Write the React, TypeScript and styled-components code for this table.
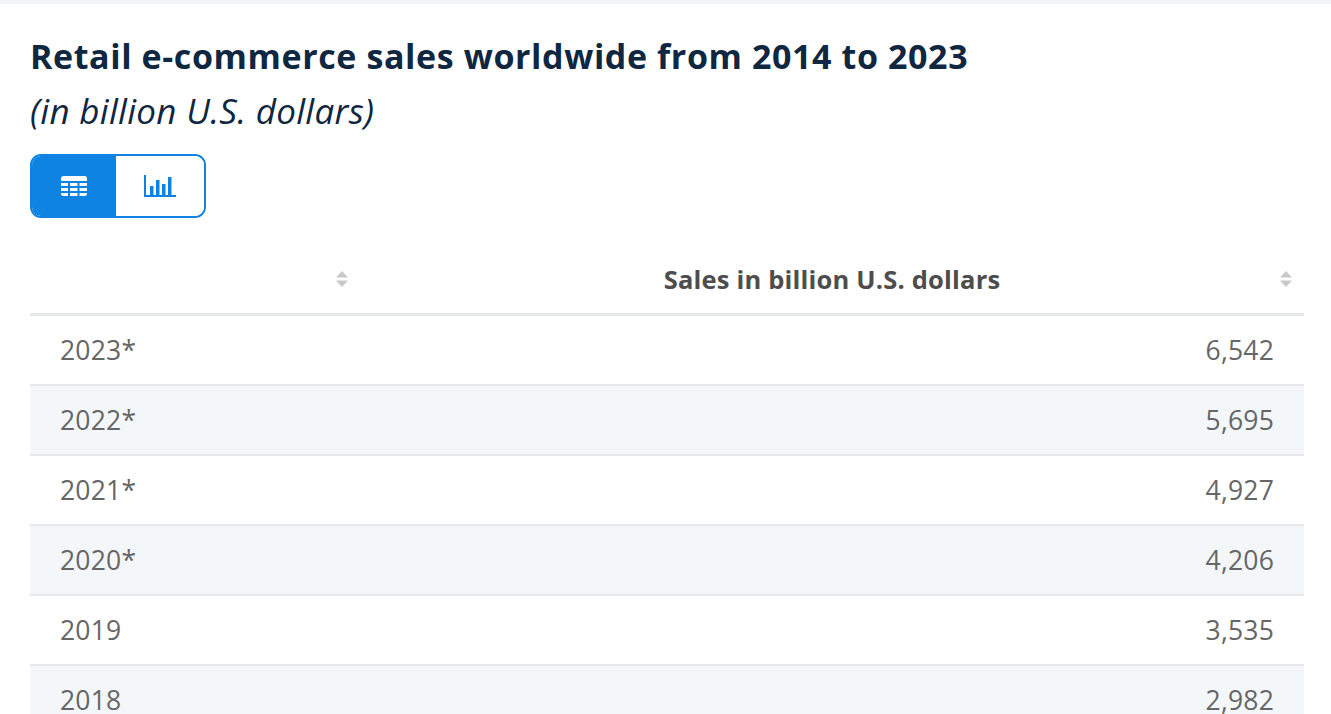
import React from "react";
import styled, { createGlobalStyle } from "styled-components";

const Global = createGlobalStyle`
  html, body { margin: 0; padding: 0; background: #fff; }
  body { font-family: "Open Sans", "Noto Sans", sans-serif; }
`;

const Page = styled.div`
  border-top: 4px solid #f4f5f7;
  padding: 0 27px 0 30px;
  background: #fff;
  height: 710px;
  overflow: hidden;
`;

const Title = styled.h1`
  margin: 32px 0 0;
  font-size: 34px;
  line-height: 40px;
  font-weight: 700;
  color: #0f2740;
  letter-spacing: 0.6px;
`;

const Subtitle = styled.div`
  margin-top: 15px;
  font-size: 35px;
  line-height: 40px;
  font-style: italic;
  color: #0f2740;
  letter-spacing: 0.3px;
`;

const Toggle = styled.div`
  margin-top: 23px;
  display: inline-flex;
  width: 176px;
  height: 64px;
  box-sizing: border-box;
  border: 2px solid #0e83e2;
  border-radius: 11px;
  overflow: hidden;
`;

const ToggleButton = styled.div<{ $active?: boolean }>`
  flex: ${(p) => (p.$active ? "0 0 84px" : "1")};
  display: flex;
  align-items: center;
  justify-content: center;
  background: ${(p) => (p.$active ? "#0e83e2" : "#fff")};
  color: ${(p) => (p.$active ? "#fff" : "#0e83e2")};
`;

const Table = styled.div`
  margin-top: 27px;
  width: 1274px;
`;

const HeaderRow = styled.div`
  display: grid;
  grid-template-columns: 330px 1fr;
  height: 68px;
  border-bottom: 3px solid #e6e7e8;
`;

const HeaderCell = styled.div`
  position: relative;
  display: flex;
  align-items: center;
  justify-content: center;
  font-size: 25.5px;
  font-weight: 700;
  color: #4d4d4d;
  letter-spacing: 0.2px;
`;

const SortIcon = styled.svg`
  position: absolute;
  right: 11px;
  top: 24px;
`;

const Row = styled.div<{ $alt?: boolean }>`
  display: grid;
  grid-template-columns: 330px 1fr;
  height: 68px;
  border-bottom: 2px solid #e7e8ea;
  background: ${(p) => (p.$alt ? "#f4f7fa" : "#fff")};
`;

const Cell = styled.div<{ $right?: boolean }>`
  display: flex;
  align-items: center;
  justify-content: ${(p) => (p.$right ? "flex-end" : "flex-start")};
  padding: 0 30px;
  font-size: 26.5px;
  color: #666;
  letter-spacing: 0.2px;
`;

const Sort = () => (
  <SortIcon width="14" height="20" viewBox="0 0 14 20">
    <path d="M7 2 L13 8.5 H1 Z" fill="#c9c9c9" />
    <path d="M1 11.5 H13 L7 18 Z" fill="#c9c9c9" />
  </SortIcon>
);

const TableIcon = () => (
  <svg width="26" height="20" viewBox="0 0 26 20">
    <rect x="0" y="0" width="26" height="20" rx="2.5" fill="#fff" />
    <g fill="#0e83e2">
      <rect x="7" y="5" width="2" height="15" />
      <rect x="16.5" y="5" width="2" height="15" />
      <rect x="0" y="5" width="26" height="2" />
      <rect x="0" y="10" width="26" height="2" />
      <rect x="0" y="15" width="26" height="2" />
    </g>
  </svg>
);

const ChartIcon = () => (
  <svg width="32" height="22" viewBox="0 0 32 22">
    <g fill="#0e83e2">
      <rect x="0" y="0" width="2" height="22" />
      <rect x="0" y="20" width="32" height="2" />
      <rect x="6" y="11" width="3.5" height="9" />
      <rect x="12" y="5" width="3.5" height="15" />
      <rect x="18" y="9" width="3.5" height="11" />
      <rect x="24" y="2" width="3.5" height="18" />
    </g>
  </svg>
);

const rows = [
  ["2023*", "6,542"],
  ["2022*", "5,695"],
  ["2021*", "4,927"],
  ["2020*", "4,206"],
  ["2019", "3,535"],
  ["2018", "2,982"],
];

export default function App() {
  return (
    <>
      <Global />
      <Page>
        <Title>Retail e-commerce sales worldwide from 2014 to 2023</Title>
        <Subtitle>(in billion U.S. dollars)</Subtitle>
        <Toggle>
          <ToggleButton $active>
            <TableIcon />
          </ToggleButton>
          <ToggleButton>
            <ChartIcon />
          </ToggleButton>
        </Toggle>
        <Table>
          <HeaderRow>
            <HeaderCell>
              <Sort />
            </HeaderCell>
            <HeaderCell>
              Sales in billion U.S. dollars
              <Sort />
            </HeaderCell>
          </HeaderRow>
          {rows.map(([y, v], i) => (
            <Row key={y} $alt={i % 2 === 1}>
              <Cell>{y}</Cell>
              <Cell $right>{v}</Cell>
            </Row>
          ))}
        </Table>
      </Page>
    </>
  );
}
